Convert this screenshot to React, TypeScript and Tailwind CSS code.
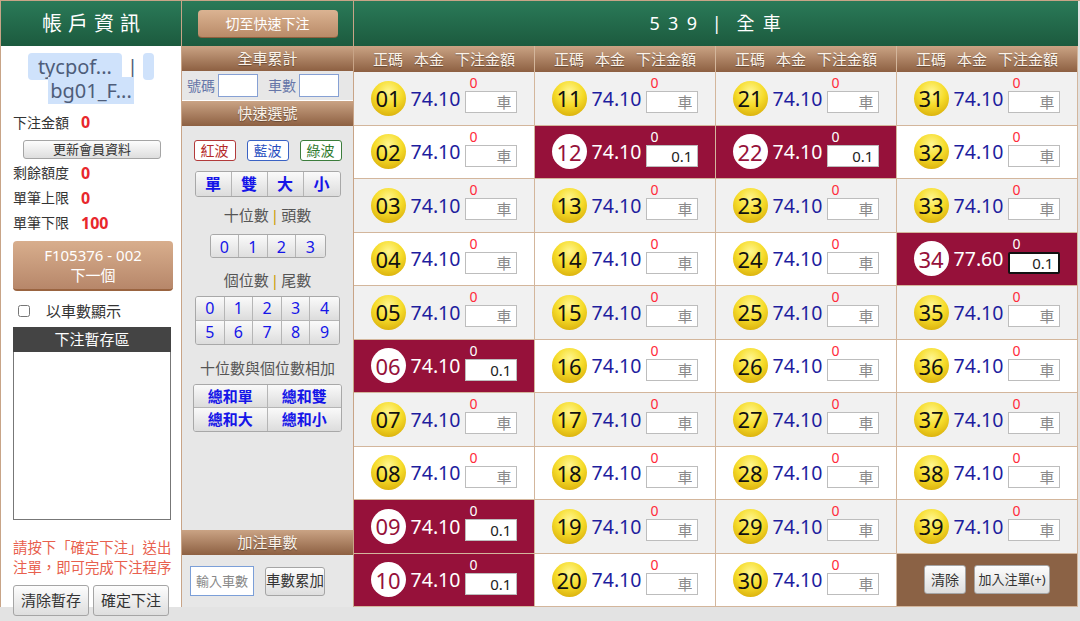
import React from "react";

const SELECTED = [6, 9, 10, 12, 22, 34];
const FONT = "font-['Noto_Sans','Noto_Sans_CJK_TC',sans-serif]";
const BAR =
  "flex items-center justify-center text-[15px] text-[#fbf3ea] bg-[linear-gradient(#caa384,#8d6042)] [text-shadow:0_1px_1px_rgba(0,0,0,0.35)]";
const GREEN = "bg-[linear-gradient(#2a7a58,#1c5a3e)]";
const GRAY_BTN =
  "bg-[linear-gradient(#fdfdfd,#dedede)] border border-[#a5a5a5] rounded-[3px] text-[#333] whitespace-nowrap px-0";
const SEG =
  "flex items-center justify-center bg-[linear-gradient(#fafafa,#dcdcdc)] border-r border-[#b5b5b5] last:border-r-0 text-[#1515e8]";

function Ball({ n, active }: { n: number; active: boolean }) {
  const label = n < 10 ? `0${n}` : `${n}`;
  return (
    <div
      className={`w-[35px] h-[35px] rounded-full flex items-center justify-center text-[22px] leading-none shrink-0 ${
        active
          ? "bg-white text-[#96113a]"
          : "bg-[radial-gradient(circle_at_50%_30%,#fff690,#f6dc2a_45%,#cf9f00)] text-[#111]"
      }`}
    >
      {label}
    </div>
  );
}

function Cell({ n, row }: { n: number; row: number }) {
  if (n === 40) {
    return (
      <div className="bg-[#8b6245] border-r border-b border-[#d3b69c] flex items-center justify-center gap-[8px]">
        <button className={`${GRAY_BTN} w-[42px] h-[29px] text-[14px]`}>清除</button>
        <button className={`${GRAY_BTN} w-[76px] h-[29px] text-[13px]`}>加入注單(+)</button>
      </div>
    );
  }
  const active = SELECTED.includes(n);
  const odds = n === 34 ? "77.60" : "74.10";
  const bg = active ? "bg-[#96113a]" : row % 2 === 0 ? "bg-[#f1f1f1]" : "bg-white";
  return (
    <div className={`${bg} border-r border-b border-[#d3b69c] flex items-center justify-center gap-[5px]`}>
      <Ball n={n} active={active} />
      <span className={`text-[19.5px] leading-none ${active ? "text-white" : "text-[#1d1d9e]"}`}>{odds}</span>
      <div className="flex flex-col mt-[-4px]">
        <span
          className={`relative top-[-2px] text-[14px] leading-[12px] pl-[4px] ${
            active ? "text-white" : "text-[#ff2b3a]"
          }`}
        >
          0
        </span>
        <input
          readOnly
          defaultValue={active ? "0.1" : ""}
          placeholder="車"
          className={`w-[52px] h-[22px] bg-white text-right pr-[5px] text-[15px] text-[#222] placeholder:text-[#8a8a8a] outline-none ${
            n === 34 ? "border-2 border-[#111] rounded-[2px]" : "border border-[#bdbdbd]"
          }`}
        />
      </div>
    </div>
  );
}

function LeftPanel() {
  const stats: [string, string][] = [
    ["剩餘額度", "0"],
    ["單筆上限", "0"],
    ["單筆下限", "100"],
  ];
  return (
    <div className="w-[181px] h-full bg-white border-r border-[#c8a487] flex flex-col shrink-0">
      <div className={`${GREEN} h-[45px] flex items-center justify-center text-white text-[20px] tracking-[0.3em] pl-[6px] shrink-0`}>
        帳戶資訊
      </div>
      <div className="pt-[9px] text-[20px] leading-[24px] text-[#4e5d7a] text-center">
        <div>
          <span className="bg-[#cfe2fb] rounded-[4px] px-[10px]">tycpof...</span>
          <span className="px-[5px]">|</span>
          <span className="bg-[#cfe2fb] rounded-[4px] px-[3px]">&nbsp;</span>
        </div>
        <div>
          <span className="bg-[#cfe2fb] px-[2px]">bg01_F...</span>
        </div>
      </div>
      <div className="px-[12px]">
        <div className="mt-[7px] h-[24px] flex items-center gap-[12px] text-[14px] text-[#333]">
          下注金額 <span className="text-[#e8272c] font-bold text-[16px]">0</span>
        </div>
        <button className={`${GRAY_BTN} mt-[6px] ml-[10px] w-[138px] h-[19px] text-[13px] leading-none`}>
          更新會員資料
        </button>
        {stats.map(([k, v]) => (
          <div key={k} className="h-[25px] flex items-center gap-[12px] text-[14px] text-[#333]">
            {k} <span className="text-[#e8272c] font-bold text-[16px]">{v}</span>
          </div>
        ))}
        <button className="mt-[6px] w-[160px] h-[50px] rounded-[4px] bg-[linear-gradient(#d8ae8d,#b7876a)] border-b-2 border-[#9a6440] text-white text-[15px] leading-[20px] flex flex-col items-center justify-center">
          <span>F105376 - 002</span>
          <span>下一個</span>
        </button>
        <label className="mt-[8px] h-[24px] flex items-center text-[15px] text-[#333]">
          <input type="checkbox" className="ml-[5px] w-[12px] h-[12px] mr-[16px]" />
          以車數顯示
        </label>
        <div className="mt-[4px] w-[158px] h-[25px] bg-[#444] text-white text-[15px] flex items-center justify-center">
          下注暫存區
        </div>
        <div className="w-[158px] h-[168px] border border-[#777] border-t-0 bg-white" />
        <p className="mt-[18px] text-[14.4px] leading-[20px] text-[#e8604e] w-[164px] whitespace-nowrap">
          請按下「確定下注」送出
          <br />
          注單，即可完成下注程序
        </p>
        <div className="mt-[7px] flex gap-[4px]">
          <button className={`${GRAY_BTN} w-[76px] h-[31px] text-[15px]`}>清除暫存</button>
          <button className={`${GRAY_BTN} w-[76px] h-[31px] text-[15px]`}>確定下注</button>
        </div>
      </div>
    </div>
  );
}

function MiddlePanel() {
  return (
    <div className="w-[172px] h-full bg-[#e7e7e7] border-r border-[#c8a487] flex flex-col shrink-0">
      <div className={`${GREEN} h-[45px] flex items-center justify-center shrink-0`}>
        <button className="w-[140px] h-[28px] rounded-[4px] bg-[linear-gradient(#dbb392,#b98b68)] border-b border-[#8f5f3e] text-white text-[14px]">
          切至快速下注
        </button>
      </div>
      <div className={`${BAR} h-[25px]`}>全車累計</div>
      <div className="h-[30px] flex items-center px-[5px] gap-[2px] text-[14px] text-[#6676a8] border-b border-white">
        號碼
        <input className="w-[40px] h-[23px] bg-white border border-[#86a0d4] ml-[1px]" readOnly />
        <span className="ml-[8px]">車數</span>
        <input className="w-[40px] h-[23px] bg-white border border-[#86a0d4] ml-[1px]" readOnly />
      </div>
      <div className={`${BAR} h-[25px]`}>快速選號</div>
      <div className="mt-[14px] flex justify-center gap-[11px] text-[14px]">
        <button className="w-[42px] h-[21px] rounded-[3px] border border-[#b23a3a] text-[#b52a2a] bg-white leading-none">紅波</button>
        <button className="w-[42px] h-[21px] rounded-[3px] border border-[#3a62c4] text-[#2a4fc0] bg-white leading-none">藍波</button>
        <button className="w-[42px] h-[21px] rounded-[3px] border border-[#3c7d3c] text-[#2f7a2f] bg-white leading-none">綠波</button>
      </div>
      <div className="mt-[10px] mx-auto w-[146px] h-[26px] grid grid-cols-4 border border-[#a8a8a8] rounded-[3px] overflow-hidden text-[16px] font-bold">
        {["單", "雙", "大", "小"].map((t) => (
          <div key={t} className={SEG}>{t}</div>
        ))}
      </div>
      <div className="mt-[9px] h-[18px] flex items-center justify-center text-[15px] text-[#555]">
        十位數<span className="text-[#c99a00] px-[2px]">|</span>頭數
      </div>
      <div className="mt-[10px] mx-auto w-[116px] h-[24px] grid grid-cols-4 border border-[#a8a8a8] rounded-[3px] overflow-hidden text-[16px]">
        {["0", "1", "2", "3"].map((t) => (
          <div key={t} className={SEG}>{t}</div>
        ))}
      </div>
      <div className="mt-[13px] h-[18px] flex items-center justify-center text-[15px] text-[#555]">
        個位數<span className="text-[#c99a00] px-[2px]">|</span>尾數
      </div>
      <div className="mt-[7px] mx-auto w-[145px] h-[49px] grid grid-cols-5 grid-rows-2 border border-[#a8a8a8] rounded-[3px] overflow-hidden text-[16px]">
        {["0", "1", "2", "3", "4", "5", "6", "7", "8", "9"].map((t) => (
          <div key={t} className={`${SEG} [&:nth-child(5n)]:border-r-0 [&:nth-child(-n+5)]:border-b`}>{t}</div>
        ))}
      </div>
      <div className="mt-[14px] h-[18px] flex items-center justify-center text-[15px] text-[#555]">
        十位數與個位數相加
      </div>
      <div className="mt-[7px] mx-auto w-[149px] h-[48px] grid grid-cols-2 grid-rows-2 border border-[#a8a8a8] rounded-[3px] overflow-hidden text-[15px] font-bold">
        {["總和單", "總和雙", "總和大", "總和小"].map((t) => (
          <div key={t} className={`${SEG} [&:nth-child(2n)]:border-r-0 [&:nth-child(-n+2)]:border-b`}>{t}</div>
        ))}
      </div>
      <div className="flex-1" />
      <div className={`${BAR} h-[25px]`}>加注車數</div>
      <div className="h-[52px] flex items-center pl-[8px] gap-[11px]">
        <input
          readOnly
          placeholder="輸入車數"
          className="w-[64px] h-[30px] bg-white border border-[#7b9fd8] text-[13px] pl-[5px] placeholder:text-[#888]"
        />
        <button className={`${GRAY_BTN} w-[60px] h-[29px] text-[14.5px]`}>車數累加</button>
      </div>
    </div>
  );
}

function Board() {
  const cols = [0, 1, 2, 3];
  const rows = [0, 1, 2, 3, 4, 5, 6, 7, 8, 9];
  return (
    <div className="flex-1 h-full flex flex-col bg-white">
      <div className={`${GREEN} h-[45px] flex items-center justify-center text-white text-[18px] tracking-[0.1em] whitespace-pre shrink-0`}>
        {"5 3 9  |  全 車"}
      </div>
      <div className="grid grid-cols-4 h-[26px] shrink-0">
        {cols.map((c) => (
          <div key={c} className={`${BAR} border-r border-[#d3b69c] gap-[11px] text-[13.5px]`}>
            <span>正碼</span>
            <span>本金</span>
            <span>下注金額</span>
          </div>
        ))}
      </div>
      <div className="flex-1 grid grid-cols-4 grid-rows-10 grid-flow-col">
        {cols.map((c) =>
          rows.map((r) => <Cell key={c * 10 + r} n={c * 10 + r + 1} row={r} />)
        )}
      </div>
    </div>
  );
}

export default function App() {
  return (
    <div className={`${FONT} w-[1080px] h-[621px] bg-[#e3e3e3] overflow-hidden`}>
      <div className="h-[607px] flex border-l border-t border-[#c8a487] pr-[2px]">
        <LeftPanel />
        <MiddlePanel />
        <Board />
      </div>
    </div>
  );
}
